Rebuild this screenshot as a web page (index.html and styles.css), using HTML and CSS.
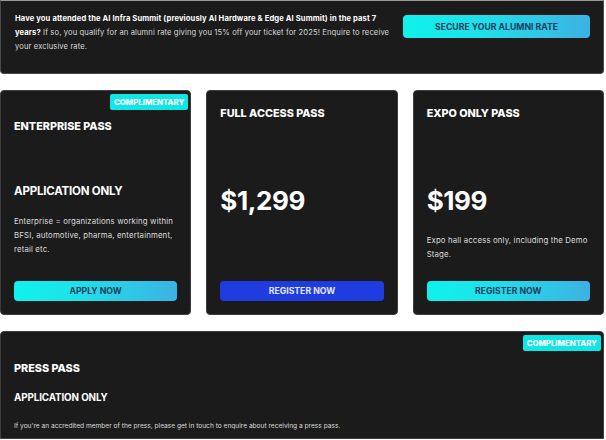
FILE: index.html
```html
<!DOCTYPE html>
<html lang="en">
<head>
<meta charset="utf-8">
<title>Passes</title>
<link rel="stylesheet" href="styles.css">
</head>
<body>
<div class="page">
  <section class="banner">
    <p class="banner-text"><strong>Have you attended the AI Infra Summit (previously AI Hardware &amp; Edge AI Summit) in the past 7 years?</strong> If so, you qualify for an alumni rate giving you 15% off your ticket for 2025! Enquire to receive your exclusive rate.</p>
    <a class="btn btn-cyan banner-btn" href="#">SECURE YOUR ALUMNI RATE</a>
  </section>

  <section class="cards">
    <div class="card">
      <div class="card-head">
        <span class="badge">COMPLIMENTARY</span>
        <h3 class="card-title">ENTERPRISE PASS</h3>
      </div>
      <div class="card-price small">APPLICATION ONLY</div>
      <p class="card-desc">Enterprise = organizations working within BFSI, automotive, pharma, entertainment, retail etc.</p>
      <a class="btn btn-cyan card-btn" href="#">APPLY NOW</a>
    </div>
    <div class="card">
      <div class="card-head">
        <h3 class="card-title">FULL ACCESS PASS</h3>
      </div>
      <div class="card-price">$1,299</div>
      <a class="btn btn-blue card-btn" href="#">REGISTER NOW</a>
    </div>
    <div class="card">
      <div class="card-head">
        <h3 class="card-title">EXPO ONLY PASS</h3>
      </div>
      <div class="card-price">$199</div>
      <p class="card-desc">Expo hall access only, including the Demo Stage.</p>
      <a class="btn btn-cyan card-btn" href="#">REGISTER NOW</a>
    </div>
  </section>

  <section class="press">
    <span class="badge">COMPLIMENTARY</span>
    <h3 class="card-title press-title">PRESS PASS</h3>
    <div class="press-app">APPLICATION ONLY</div>
    <p class="press-desc">If you're an accredited member of the press, please get in touch to enquire about receiving a press pass.</p>
  </section>
</div>
</body>
</html>
```

FILE: styles.css
```css
* { box-sizing: border-box; }
html, body { margin: 0; padding: 0; background: #ffffff; }
body { font-family: Inter, "Liberation Sans", sans-serif; color: #ffffff; }

.page {
  width: 604px;
  display: flex;
  flex-direction: column;
  gap: 16px;
}

.banner {
  height: 74px;
  background: #1b1b1b;
  border: 1px solid #4a4a4a;
  border-top-color: #9a9a9a;
  border-radius: 0 0 4px 4px;
  display: flex;
  align-items: flex-start;
  justify-content: space-between;
  padding: 11px 13px 0 14px;
}
.banner-text {
  margin: 0;
  width: 380px;
  font-size: 7.6px;
  letter-spacing: 0.12px;
  line-height: 14px;
  color: #d8d8d8;
}
.banner-text strong { color: #ffffff; font-weight: 700; }

.btn {
  display: flex;
  align-items: center;
  justify-content: center;
  height: 21px;
  border-radius: 4px;
  font-size: 8.7px;
  font-weight: 700;
  text-decoration: none;
}
.btn-cyan {
  background: linear-gradient(90deg, #0ff2ec 0%, #1fe0ea 40%, #3cb2e2 100%);
  color: #1f3d5e;
}
.btn-blue {
  background: #1f3ce0;
  color: #e2e8ff;
}
.banner-btn {
  width: 187px;
  flex-shrink: 0;
  margin-top: 3px;
  height: 23px;
}

.cards {
  display: grid;
  grid-template-columns: repeat(3, 1fr);
  gap: 15px;
}
.card {
  height: 225px;
  background: #1b1b1b;
  border: 1px solid #3e3e3e;
  border-radius: 4px;
  display: flex;
  flex-direction: column;
  padding: 3px 13px 13px 13px;
}
.card-head {
  height: 90px;
  display: flex;
  flex-direction: column;
}
.badge {
  align-self: flex-end;
  margin-right: -11px;
  background: #11e6e6;
  color: #ffffff;
  font-size: 7.8px;
  font-weight: 800;
  line-height: 16px;
  height: 16px;
  padding: 0 4px;
  border-radius: 2px;
}
.card-title {
  margin: 14px 0 0 0;
  font-size: 10.8px;
  line-height: 12px;
  font-weight: 800;
  color: #ffffff;
}
.card-head .badge + .card-title { margin-top: 11px; }

.card-price {
  font-size: 26px;
  line-height: 34px;
  font-weight: 700;
  letter-spacing: -0.4px;
}
.card-price.small {
  font-size: 11.5px;
  line-height: 15px;
  letter-spacing: -0.2px;
}
.card-desc {
  margin: 15px 0 0 0;
  font-size: 7.8px;
  letter-spacing: 0.15px;
  line-height: 14px;
  color: #dcdcdc;
}
.card-btn { margin-top: auto; height: 20px; }

.press {
  height: 108px;
  background: #1b1b1b;
  border: 1px solid #3e3e3e;
  border-radius: 4px 4px 0 0;
  display: flex;
  flex-direction: column;
  padding: 3px 13px 0 13px;
}
.press-title { margin-top: 12px; }
.press-app {
  margin-top: 16px;
  font-size: 9.8px;
  line-height: 13px;
  font-weight: 700;
  letter-spacing: -0.1px;
}
.press-desc {
  margin: 15px 0 0 0;
  font-size: 6.6px;
  line-height: 14px;
  color: #dcdcdc;
}
```
